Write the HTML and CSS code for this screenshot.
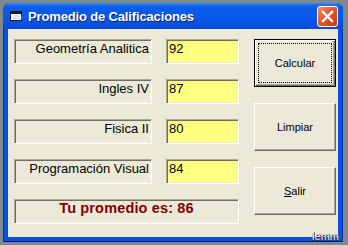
FILE: index.html
```html
<!DOCTYPE html>
<html lang="es">
<head>
<meta charset="utf-8">
<title>Promedio de Calificaciones</title>
<link rel="stylesheet" href="styles.css">
</head>
<body>
<div class="win">
  <div class="titlebar">
    <svg class="appicon" width="13" height="11" viewBox="0 0 13 11">
      <rect x="0.5" y="0.5" width="11" height="9" fill="#fff" stroke="#1a1a1a"/>
      <rect x="1" y="1" width="10" height="2" fill="#1a1a1a"/>
      <rect x="2" y="4" width="8" height="4" fill="#d8e8ff"/>
      <path d="M11.5 5 L12.5 6.5 L11.5 8" fill="#7aa7e8"/>
    </svg>
    <span class="title">Promedio de Calificaciones</span>
    <div class="close">
      <svg width="13" height="13" viewBox="0 0 13 13"><path d="M2 2 L11 11 M11 2 L2 11" stroke="#fff" stroke-width="2.4" stroke-linecap="square"/></svg>
    </div>
  </div>
  <div class="client">
    <div class="fields">
      <div class="lbl">Geometría Analitica</div>
      <div class="txt">92</div>
      <div class="lbl">Ingles IV</div>
      <div class="txt">87</div>
      <div class="lbl">Fisica II</div>
      <div class="txt">80</div>
      <div class="lbl">Programación Visual</div>
      <div class="txt">84</div>
      <div class="result">Tu promedio es: 86</div>
    </div>
    <div class="buttons">
      <button class="btn default">Calcular</button>
      <button class="btn">Limpiar</button>
      <button class="btn"><u>S</u>alir</button>
    </div>
  </div>
  <span class="mark">lemm</span>
</div>
</body>
</html>
```
FILE: styles.css
```css
html, body {
  margin: 0;
  padding: 0;
  background: #7d898b;
  width: 348px;
  height: 245px;
  overflow: hidden;
}
.win {
  position: relative;
  margin: 3px 0 0 3px;
  width: 340px;
  height: 239px;
  display: flex;
  flex-direction: column;
  border-radius: 7px 7px 0 0;
  background: #0b4fe0;
  box-shadow: inset 1px 0 #0a2fb0, inset -1px 0 #0a2fb0, inset 0 -1px #00138c;
  font-family: "Liberation Sans", Arial, sans-serif;
}
.titlebar {
  height: 26px;
  display: flex;
  align-items: center;
  padding: 0 5px 0 7px;
  border-radius: 7px 7px 0 0;
  background: linear-gradient(#3b8cf8 0px, #1a6ef2 2px, #0a5ce8 5px, #0658ea 14px, #0452e0 20px, #0a49d2 26px);
}
.appicon {
  flex: none;
  margin-top: 1px;
}
.title {
  margin-left: 5px;
  color: #fff;
  font-weight: bold;
  font-size: 13px;
  letter-spacing: -0.15px;
  text-shadow: 1px 1px #0a1f7a;
  flex: 1;
}
.close {
  width: 19px;
  height: 19px;
  border: 1px solid #fff;
  border-radius: 3px;
  background: linear-gradient(135deg, #f0916a, #e2582c 45%, #c93a14);
  display: flex;
  align-items: center;
  justify-content: center;
  margin-top: 1px;
}
.client {
  flex: 1;
  margin: 0 5px 5px 5px;
  background: #ece9d8;
  display: flex;
  align-items: flex-start;
  padding: 10px 0 0 6px;
}
.fields {
  display: grid;
  grid-template-columns: 138px 73px;
  grid-auto-rows: 25px;
  column-gap: 14px;
  row-gap: 15px;
}
.lbl, .txt, .result {
  box-sizing: border-box;
  border: 1px solid;
  border-color: #aca899 #fff #fff #aca899;
  box-shadow: inset 1px 1px #716f64, inset -1px -1px #f1efe2;
  padding-top: 1px;
  font-size: 13px;
  line-height: 16px;
  color: #000;
}
.lbl {
  text-align: right;
  padding-right: 2px;
  white-space: nowrap;
}
.txt {
  background: #ffff80;
  padding-left: 2px;
}
.result {
  grid-column: 1 / 3;
  text-align: center;
  font-weight: bold;
  font-size: 14.5px;
  line-height: 15px;
  color: #800000;
  letter-spacing: 0.15px;
}
.buttons {
  display: flex;
  flex-direction: column;
  gap: 16px;
  margin-left: 15px;
}
.btn {
  box-sizing: border-box;
  width: 82px;
  height: 48px;
  padding: 0;
  margin: 0;
  background: #ece9d8;
  font-family: "Liberation Sans", Arial, sans-serif;
  font-size: 11px;
  color: #000;
  border: 1px solid;
  border-color: #fff #6f6d63 #6f6d63 #fff;
  box-shadow: inset -1px -1px #aca899;
}
.btn.default {
  border: 1px solid #000;
  box-shadow: inset 1px 1px #fff, inset -1px -1px #6f6d63, inset -2px -2px #aca899;
  outline: 1px dotted #000;
  outline-offset: -5px;
}
.mark {
  position: absolute;
  right: 4px;
  bottom: 1px;
  font-size: 11px;
  line-height: 10px;
  color: #f4f4f4;
  text-shadow: 1px 0 #333, 0 1px #333;
}
```
